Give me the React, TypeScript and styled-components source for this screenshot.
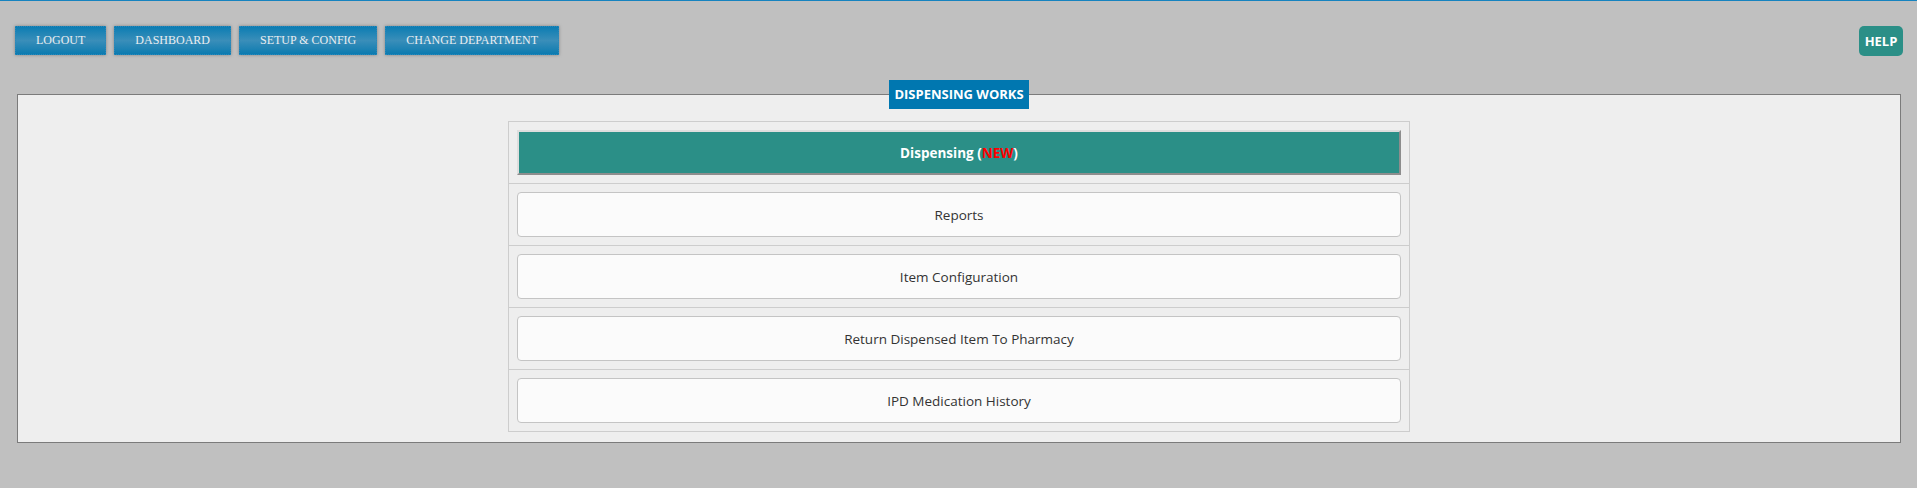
import styled, { createGlobalStyle } from 'styled-components';

const GlobalStyle = createGlobalStyle`
  html, body {
    margin: 0;
    padding: 0;
    background: #c0c0c0;
  }
  body {
    font-family: "Open Sans", "Noto Sans", Arial, sans-serif;
  }
`;

const Page = styled.div`
  min-height: 488px;
  box-sizing: border-box;
  border-top: 1px solid #1683bf;
  background: #c0c0c0;
`;

const Toolbar = styled.div`
  display: flex;
  justify-content: space-between;
  align-items: flex-start;
  padding: 25px 14px 0 15px;
`;

const NavGroup = styled.div`
  display: flex;
  gap: 8px;
`;

const NavButton = styled.button`
  height: 29px;
  padding: 0 20px;
  border: 1px dotted #2a89bb;
  background: linear-gradient(to bottom, #0c7db3 0%, #3a8eb9 50%, #0c7bb0 100%);
  box-shadow: 0 0 3px rgba(80, 80, 80, 0.55);
  color: #e9eef2;
  font-family: "Liberation Serif", "Times New Roman", serif;
  font-size: 12px;
  text-transform: uppercase;
  cursor: pointer;
`;

const HelpButton = styled.button`
  width: 44px;
  height: 30px;
  padding: 0;
  border: none;
  border-radius: 5px;
  background: #2b8f87;
  color: #ffffff;
  font-family: "Open Sans", "Noto Sans", sans-serif;
  font-size: 13px;
  font-weight: 700;
  cursor: pointer;
`;

const Panel = styled.section`
  display: flex;
  flex-direction: column;
  margin: 38px 16px 0 17px;
  padding: 0 0 10px;
  border: 1px solid #7b7b7b;
  background: #eeeeee;
`;

const Legend = styled.div`
  align-self: center;
  margin: -15px 0 12px;
  height: 29px;
  padding: 0 5px;
  background: #0077b0;
  color: #ffffff;
  font-size: 13px;
  font-weight: 700;
  line-height: 29px;
  white-space: nowrap;
`;

const MenuTable = styled.div`
  align-self: center;
  width: 902px;
  box-sizing: border-box;
  border: 1px solid #cdcdcd;
`;

const MenuRow = styled.div`
  padding: 8px;
  & + & {
    border-top: 1px solid #cdcdcd;
  }
`;

const MenuButton = styled.button<{ $active?: boolean }>`
  display: block;
  width: 100%;
  height: 45px;
  box-sizing: border-box;
  font-family: "Open Sans", "Noto Sans", sans-serif;
  font-size: 13.5px;
  cursor: pointer;
  ${p => p.$active ? `
    background: #2b8f87;
    color: #ffffff;
    font-weight: 700;
    border-style: solid;
    border-width: 2px;
    border-color: #dedede #8d8d8d #8d8d8d #dedede;
    border-radius: 0;
  ` : `
    background: #fbfbfb;
    color: #333333;
    font-weight: 400;
    border: 1px solid #c4c4c4;
    border-radius: 4px;
  `}
`;

const NewTag = styled.span`
  color: #ff0000;
`;

const navItems = ['Logout', 'Dashboard', 'Setup & Config', 'Change Department'];

const menuItems = ['Reports', 'Item Configuration', 'Return Dispensed Item To Pharmacy', 'IPD Medication History'];

export default function App() {
  return (
    <Page>
      <GlobalStyle />
      <Toolbar>
        <NavGroup>
          {navItems.map(item => (
            <NavButton key={item}>{item}</NavButton>
          ))}
        </NavGroup>
        <HelpButton>HELP</HelpButton>
      </Toolbar>
      <Panel>
        <Legend>DISPENSING WORKS</Legend>
        <MenuTable>
          <MenuRow>
            <MenuButton $active>
              Dispensing (<NewTag>NEW</NewTag>)
            </MenuButton>
          </MenuRow>
          {menuItems.map(item => (
            <MenuRow key={item}>
              <MenuButton>{item}</MenuButton>
            </MenuRow>
          ))}
        </MenuTable>
      </Panel>
    </Page>
  );
}
